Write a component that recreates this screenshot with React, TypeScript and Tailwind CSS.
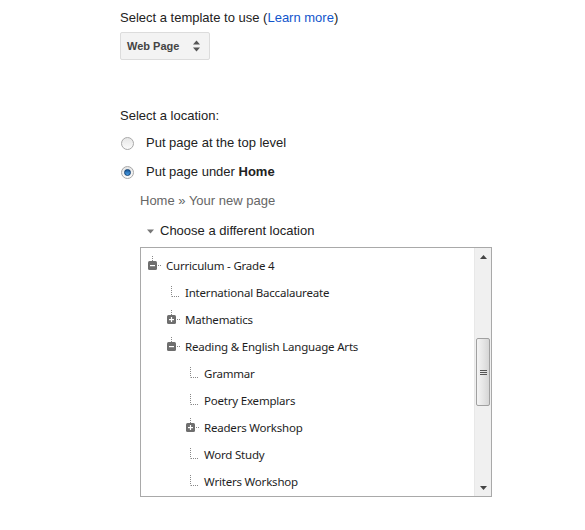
type Node = { label: string; level: number; kind: "open" | "closed" | "leaf" };

const nodes: Node[] = [
  { label: "Curriculum - Grade 4", level: 0, kind: "open" },
  { label: "International Baccalaureate", level: 1, kind: "leaf" },
  { label: "Mathematics", level: 1, kind: "closed" },
  { label: "Reading & English Language Arts", level: 1, kind: "open" },
  { label: "Grammar", level: 2, kind: "leaf" },
  { label: "Poetry Exemplars", level: 2, kind: "leaf" },
  { label: "Readers Workshop", level: 2, kind: "closed" },
  { label: "Word Study", level: 2, kind: "leaf" },
  { label: "Writers Workshop", level: 2, kind: "leaf" },
];

function Connector({ kind }: { kind: Node["kind"] }) {
  if (kind === "leaf") {
    return (
      <svg width="18" height="27" className="shrink-0">
        <line x1="4.5" y1="7" x2="4.5" y2="17.5" stroke="#888" strokeDasharray="1 1" />
        <line x1="5" y1="17.5" x2="12" y2="17.5" stroke="#888" strokeDasharray="1 1" />
      </svg>
    );
  }
  return (
    <svg width="18" height="27" className="shrink-0">
      <line x1="4.5" y1="4" x2="4.5" y2="9" stroke="#888" strokeDasharray="1 1" />
      <rect x="0" y="9" width="9" height="9" rx="1.5" fill="#6e6e6e" />
      <rect x="2" y="13" width="5" height="1.2" fill="#fff" />
      {kind === "closed" && <rect x="3.9" y="11" width="1.2" height="5" fill="#fff" />}
      <line x1="10" y1="13.5" x2="14" y2="13.5" stroke="#888" strokeDasharray="1 1" />
    </svg>
  );
}

function Radio({ checked }: { checked?: boolean }) {
  return (
    <span className="w-[13px] h-[13px] rounded-full border border-[#a8a8a8] bg-gradient-to-b from-[#e6e6e6] to-[#fbfbfb] flex items-center justify-center shrink-0">
      {checked && (
        <span className="w-[7px] h-[7px] rounded-full bg-gradient-to-b from-[#1a5a9c] to-[#4aa0e8] border border-[#0d3f73]" />
      )}
    </span>
  );
}

export default function App() {
  return (
    <div className="w-[585px] h-[530px] bg-white pl-[120px] text-[13px] text-[#222] font-['Liberation_Sans',Arial,sans-serif]">
      <div className="pt-[10px] leading-[16px]">
        Select a template to use (<span className="text-[#1155cc]">Learn more</span>)
      </div>

      <div className="mt-[6px] w-[90px] h-[28px] rounded-[2px] border border-[#dcdcdc] bg-[#f3f3f3] flex items-center pl-[6px] pr-[8px] justify-between">
        <span className="text-[11px] font-bold text-[#444]">Web Page</span>
        <svg width="9" height="12" viewBox="0 0 9 12">
          <path d="M4.5 0.5 L8 4.5 L1 4.5 Z" fill="#555" />
          <path d="M4.5 11.5 L8 7.5 L1 7.5 Z" fill="#555" />
        </svg>
      </div>

      <div className="mt-[48px] leading-[16px]">Select a location:</div>

      <div className="mt-[9px] h-[20px] flex items-center">
        <span className="ml-[1px] mr-[12px]"><Radio /></span>
        <span>Put page at the top level</span>
      </div>
      <div className="mt-[9px] h-[20px] flex items-center">
        <span className="ml-[1px] mr-[12px]"><Radio checked /></span>
        <span>
          Put page under <b>Home</b>
        </span>
      </div>

      <div className="mt-[11px] ml-[20px] leading-[16px] text-[#666]">Home » Your new page</div>

      <div className="mt-[14px] ml-[27px] leading-[16px] flex items-center">
        <svg width="7" height="5" className="mr-[6px]">
          <path d="M0 0.5 L7 0.5 L3.5 4.5 Z" fill="#777" />
        </svg>
        <span>Choose a different location</span>
      </div>

      <div className="mt-[8px] ml-[20px] w-[352px] h-[250px] border border-[#a9a9a9] flex">
        <div className="flex-1 pt-[4px] font-['Noto_Sans',sans-serif] text-[11.5px] tracking-[-0.2px] text-[#1e1e1e]">
          {nodes.map((n) => (
            <div
              key={n.label}
              className="h-[27px] flex items-center"
              style={{ paddingLeft: 7 + n.level * 19 }}
            >
              <Connector kind={n.kind} />
              <span className="leading-[16px] whitespace-nowrap">{n.label}</span>
            </div>
          ))}
        </div>

        <div className="w-[17px] bg-[#f0f0f0] border-l border-[#e8e8e8] flex flex-col">
          <div className="h-[17px] flex items-center justify-center">
            <svg width="7" height="4">
              <path d="M3.5 0 L7 4 L0 4 Z" fill="#444" />
            </svg>
          </div>
          <div className="h-[73px]" />
          <div className="h-[68px] mx-[1px] rounded-[2px] border border-[#a0a0a0] bg-gradient-to-r from-[#f4f4f4] via-[#e6e6e6] to-[#d6d6d6] flex flex-col items-center justify-center gap-[1px]">
            <div className="w-[7px] h-[1px] bg-[#555]" />
            <div className="w-[7px] h-[1px] bg-[#555]" />
            <div className="w-[7px] h-[1px] bg-[#555]" />
          </div>
          <div className="flex-1" />
          <div className="h-[17px] flex items-center justify-center">
            <svg width="7" height="4">
              <path d="M0 0 L7 0 L3.5 4 Z" fill="#444" />
            </svg>
          </div>
        </div>
      </div>
    </div>
  );
}
